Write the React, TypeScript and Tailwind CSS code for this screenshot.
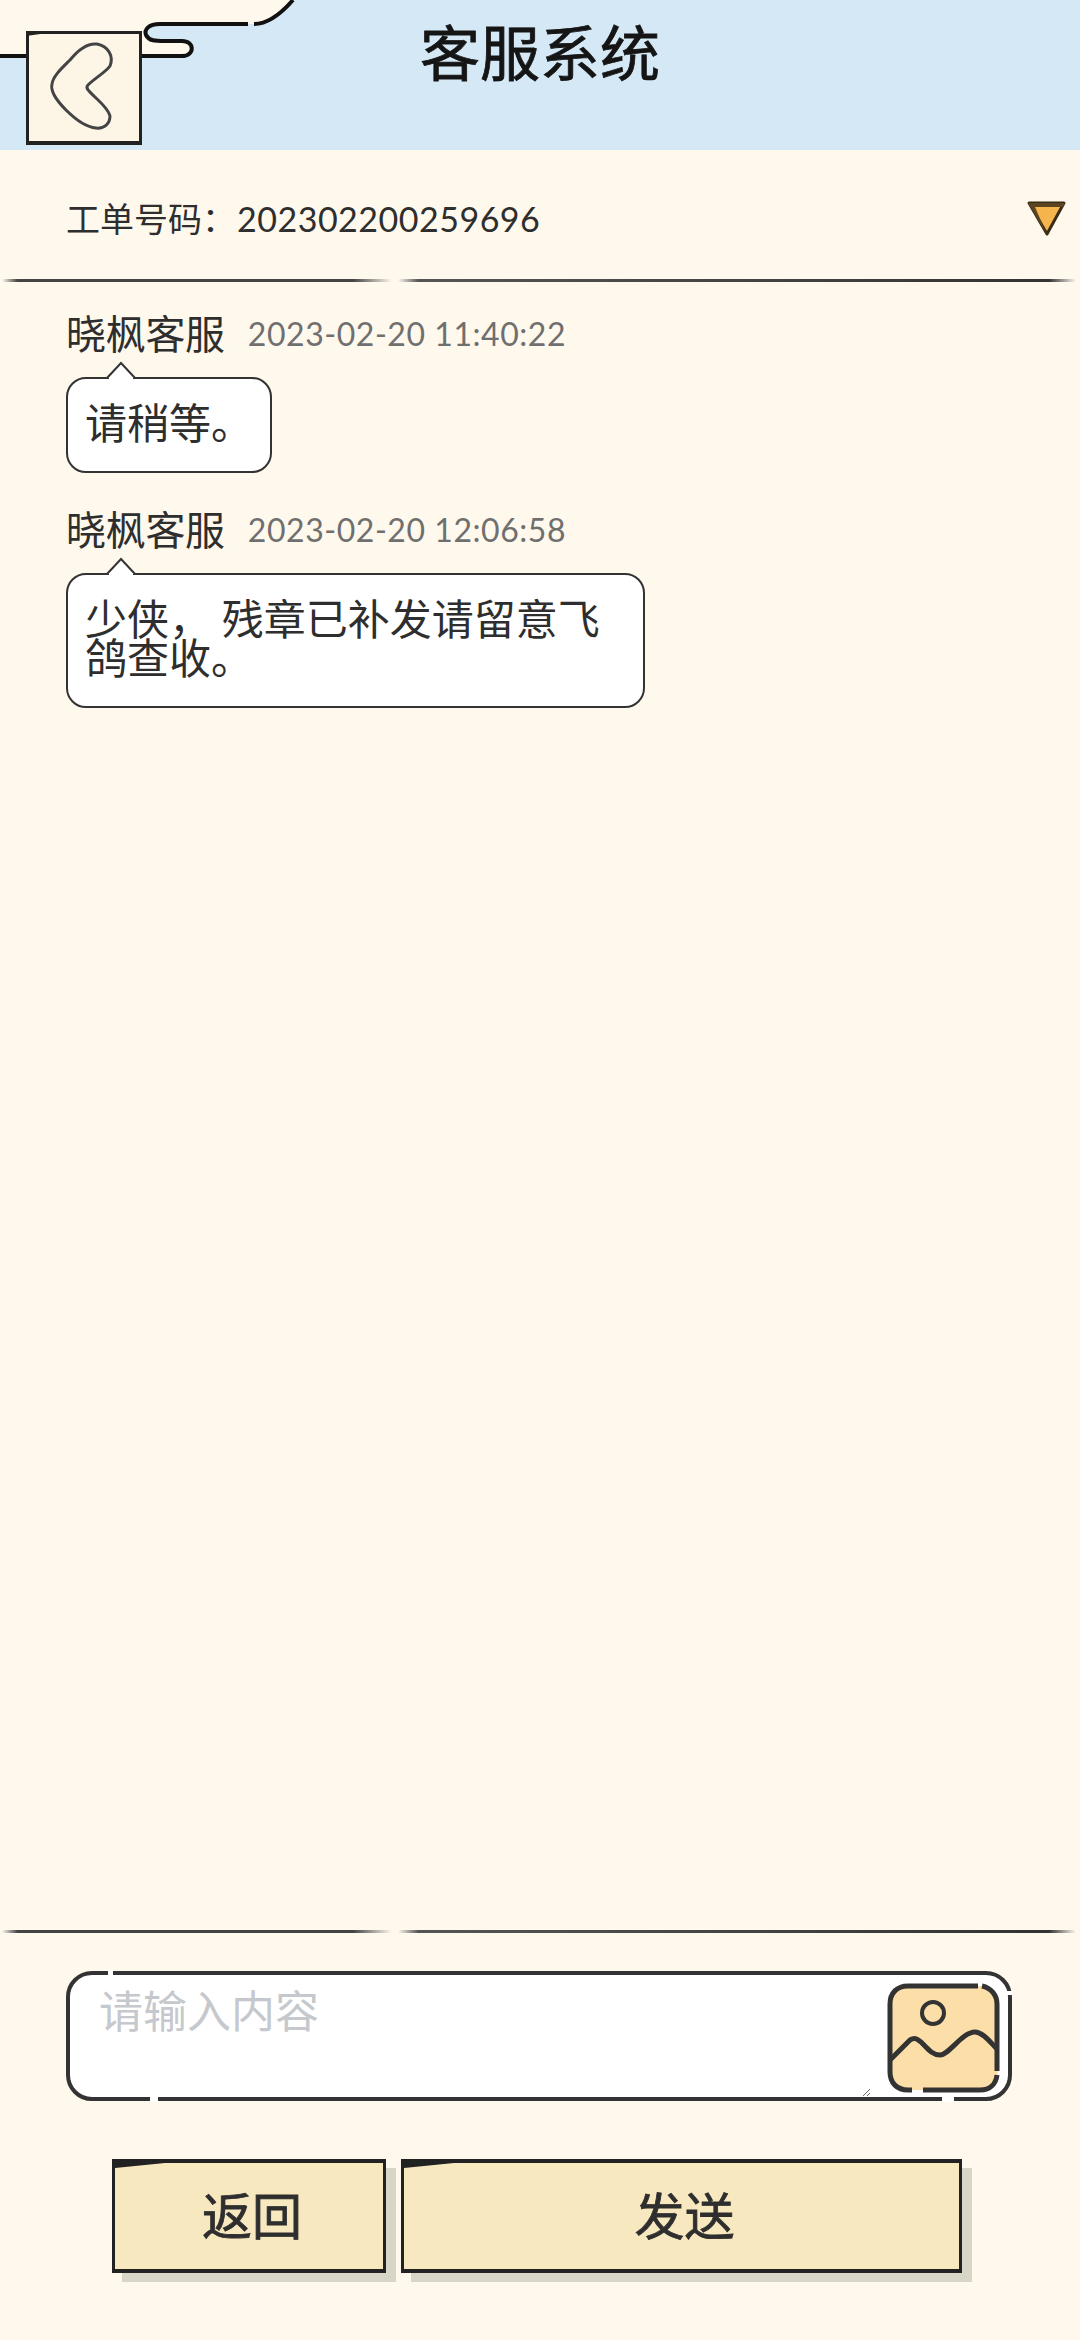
const sans = 'font-["Lato","Noto_Sans_CJK_SC",sans-serif]';

function Divider() {
  return (
    <div className="flex h-[3px] w-full gap-[6px] pl-[2px] pr-[4px]">
      <div className="w-[390px] rounded-full bg-[linear-gradient(90deg,#fff8ed_0%,#444_4%,#444_90%,#fff8ed_100%)]" />
      <div className="flex-1 rounded-full bg-[linear-gradient(90deg,#fff8ed_0%,#555_3%,#333_96%,#fff8ed_100%)]" />
    </div>
  );
}

function Message({ time, text, width }: { time: string; text: string; width: string }) {
  return (
    <div className="mb-[37px]">
      <div className="flex h-[40px] items-center text-[40px] leading-[40px] text-[#2e2e2e]">
        <span className="tracking-[-0.3px]">晓枫客服</span>
        <span className="ml-[23px] text-[32px] tracking-[0.55px] text-[#6f6f6f]">{time}</span>
      </div>
      <div className={`relative mt-[23px] rounded-[20px] border-2 border-[#333] bg-white px-[17px] pb-[28px] pt-[25px] text-[42px] leading-[39px] text-[#2e2e2e] ${width}`}>
        <svg className="absolute left-[38px] top-[-18px]" width="30" height="18" viewBox="0 0 30 18">
          <path d="M1 17 L15 2 L29 17" fill="#fff" stroke="#333" strokeWidth="2" />
          <path d="M3 17.5 H27" stroke="#fff" strokeWidth="3" />
        </svg>
        {text}
      </div>
    </div>
  );
}

function ActionButton({ label, width }: { label: string; width: string }) {
  return (
    <button className={`relative flex h-[114px] items-center justify-center border-[3px] border-t-[4px] border-b-[4px] border-[#222] bg-[#f8e8bf] pl-[6px] text-[50px] text-[#2e2e2e] shadow-[10px_9px_0_#d8d6c6] [-webkit-text-stroke:0.8px_#2e2e2e] ${width}`}>
      <svg className="absolute left-0 top-0" width="50" height="6" viewBox="0 0 50 6">
        <path d="M0 0 H50 L0 5 Z" fill="#222" />
      </svg>
      {label}
    </button>
  );
}

export default function App() {
  return (
    <div className={`flex h-[2340px] w-[1080px] flex-col overflow-hidden bg-[#fff8ed] ${sans}`}>
      {/* Header */}
      <header className="relative flex h-[150px] shrink-0 justify-center bg-[#d5e8f5] pt-[23px]">
        <svg className="absolute left-0 top-0" width="300" height="60" viewBox="0 0 300 60">
          <path d="M0 0 H293 C280 15 268 24 250 24 H160 C148 24 144 30 146 35 C149 41 155 41 165 41 H182 C195 41 195 56 182 56 H0 Z" fill="#fff8ed" />
          <path d="M293 0 C280 15 268 24 254 24" fill="none" stroke="#111" strokeWidth="4" />
          <path d="M248 24 H160 C148 24 144 30 146 35 C149 41 155 41 165 41 H182 C195 41 195 56 182 56 H0" fill="none" stroke="#111" strokeWidth="4" />
        </svg>
        <button className="absolute left-[26px] top-[31px] h-[114px] w-[116px] border-[3px] border-t-[3px] border-b-[4px] border-[#222] bg-[#fdf5e6]">
          <svg className="absolute left-[-3px] top-[-3px]" width="116" height="114" viewBox="26 31 116 114">
            <path d="M26 31 H62 L26 36 Z" fill="#222" />
            <path d="M70 60 C78 50 88 43 97 44 C108 46 114 56 110 66 C106 72 95 78 88 85 C86 87 87 89 89 91 C96 99 108 107 110 116 C110 124 104 129 96 128 C84 127 74 118 66 110 C58 102 50 92 52 84 C53 76 62 68 70 60 Z" fill="none" stroke="#444" strokeWidth="3" />
          </svg>
        </button>
        <h1 className="text-[60px] leading-[60px] text-[#151515] [-webkit-text-stroke:0.8px_#151515]">客服系统</h1>
      </header>

      {/* Ticket row */}
      <div className="flex h-[129px] shrink-0 items-center justify-between pl-[66px] pr-[13px] pt-[8px]">
        <span className="text-[34px] text-[#2e2e2e]">
          工单号码：<span className="ml-[1px] tracking-[0.5px]">202302200259696</span>
        </span>
        <svg width="41" height="37" viewBox="0 0 41 37">
          <path d="M3 3 H38 L21 34 Z" fill="#f6b54c" stroke="#3a2c14" strokeWidth="3" strokeLinejoin="round" />
          <path d="M2 3 H39 L37 7 H9 L21 35 Z" fill="#5b4520" />
        </svg>
      </div>
      <Divider />

      {/* Messages */}
      <div className="flex-1 pl-[66px] pt-[32px]">
        <Message time="2023-02-20 11:40:22" text="请稍等。" width="w-[206px]" />
        <Message time="2023-02-20 12:06:58" text="少侠， 残章已补发请留意飞鸽查收。" width="w-[579px]" />
      </div>
      <Divider />

      {/* Input */}
      <div className="relative ml-[66px] mt-[38px] flex h-[130px] w-[946px] shrink-0 rounded-[26px] border-[4px] border-[#333] bg-white">
        <textarea
          placeholder="请输入内容"
          className="h-[122px] w-[801px] bg-transparent pl-[29px] pt-[14px] text-[44px] leading-[44px] outline-none placeholder:text-[#c5c8cd]"
        />
        <svg className="ml-[16px] mt-[8px]" width="114" height="110" viewBox="0 0 114 110">
          <rect x="3" y="3" width="108" height="104" rx="18" fill="#fcdfa8" />
          <path d="M91 3 H21 C10 3 3 10 3 21 V89 C3 100 10 107 21 107 H25 M36 107 H93 C104 107 109 100 110 92 M110 88 V21 C110 12 104 5 95 3" fill="none" stroke="#333" strokeWidth="5" />
          <circle cx="46" cy="30" r="11" fill="none" stroke="#333" strokeWidth="4" />
          <path d="M3 77 L23 57 C28 54 30 56 34 59 C40 65 45 72 53 72 C62 72 75 49 88 49 C96 49 104 60 110 66" fill="none" stroke="#333" strokeWidth="5" />
        </svg>
        <div className="absolute left-[38px] top-[-5px] h-[6px] w-[5px] bg-white" />
        <div className="absolute bottom-[-5px] left-[80px] h-[6px] w-[8px] bg-white" />
        <div className="absolute bottom-[-5px] left-[872px] h-[6px] w-[12px] bg-white" />
        <div className="absolute right-[-5px] top-[16px] h-[4px] w-[7px] bg-white" />
      </div>

      {/* Buttons */}
      <div className="ml-[112px] mb-[67px] mt-[58px] flex shrink-0 gap-[15px]">
        <ActionButton label="返回" width="w-[274px]" />
        <ActionButton label="发送" width="w-[561px]" />
      </div>
    </div>
  );
}
